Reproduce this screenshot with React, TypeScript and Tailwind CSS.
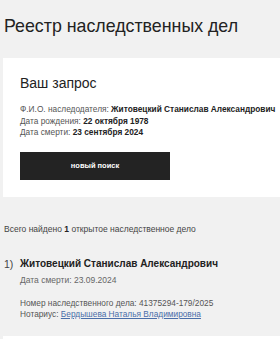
import React from "react";

export default function App() {
  return (
    <div className="h-[339px] bg-[#f1f1f1] text-[#222] font-['Liberation_Sans',Arial,sans-serif] overflow-hidden">
      <h1 className="pl-[4px] pt-[16px] text-[17.8px] leading-[21px] font-normal">Реестр наследственных дел</h1>

      <div className="mt-[21px] ml-[3px] w-[300px] bg-white pl-[17px] pt-[17px] pb-[17px]">
        <h2 className="text-[14px] leading-[16px] mb-[13px]">Ваш запрос</h2>
        <div className="text-[8.3px] leading-[11.5px] text-[#555]">
          <div>
            Ф.И.О. наследодателя: <b className="text-[#222]">Житовецкий Станислав Александрович</b>
          </div>
          <div>
            Дата рождения: <b className="text-[#222]">22 октября 1978</b>
          </div>
          <div>
            Дата смерти: <b className="text-[#222]">23 сентября 2024</b>
          </div>
        </div>
        <button className="mt-[13px] w-[150px] h-[28px] bg-[#232323] text-white text-[7.5px] font-bold lowercase">
          новый поиск
        </button>
      </div>

      <div className="pl-[4px] mt-[27px] text-[8.5px] leading-[11px] text-[#444]">
        Всего найдено <b className="text-[#222]">1</b> открытое наследственное дело
      </div>

      <div className="mt-[22px] flex">
        <div className="w-[20px] pl-[4px] text-[10.5px] leading-[14px] text-[#444]">1)</div>
        <div>
          <div className="text-[10px] leading-[14px] font-bold">Житовецкий Станислав Александрович</div>
          <div className="mt-[4px] text-[8.5px] leading-[11px] text-[#666]">Дата смерти: 23.09.2024</div>
          <div className="mt-[12px] text-[8.3px] leading-[11.5px] text-[#555]">
            <div>Номер наследственного дела: 41375294-179/2025</div>
            <div>
              Нотариус:{" "}
              <a href="#" className="text-[#4a6ea9] underline">
                Бердышева Наталья Владимировна
              </a>
            </div>
          </div>
        </div>
      </div>

      <div className="mt-[15px] ml-[3px] w-[300px] h-[40px] bg-white" />
    </div>
  );
}
